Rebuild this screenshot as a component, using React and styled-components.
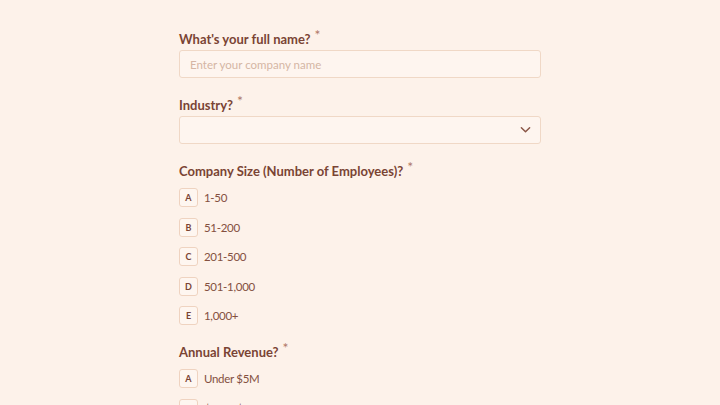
import React from "react";
import styled, { createGlobalStyle } from "styled-components";

const GlobalStyle = createGlobalStyle`
  html, body {
    margin: 0;
    padding: 0;
    background: #fdf2ea;
  }
  body {
    font-family: "Lato", "Liberation Sans", sans-serif;
  }
`;

const companySizes = ["1-50", "51-200", "201-500", "501-1,000", "1,000+"];
const revenues = ["Under $5M", "$5M - $25M"];

function App() {
  return (
    <>
      <GlobalStyle />
      <Page>
        <Form>
          <Field>
            <Label>
              What's your full name?<Req>*</Req>
            </Label>
            <Input placeholder="Enter your company name" />
          </Field>

          <Field>
            <Label>
              Industry?<Req>*</Req>
            </Label>
            <SelectBox>
              <Chevron viewBox="0 0 12 8" width="11" height="8">
                <path d="M1.5 1.5 L6 6 L10.5 1.5" fill="none" stroke="#8a5646" strokeWidth="1.6" strokeLinecap="round" strokeLinejoin="round" />
              </Chevron>
            </SelectBox>
          </Field>

          <Field>
            <Label $tight>
              Company Size (Number of Employees)?<Req>*</Req>
            </Label>
            <Options>
              {companySizes.map((size, i) => (
                <Option key={size}>
                  <Key>{String.fromCharCode(65 + i)}</Key>
                  <OptionText>{size}</OptionText>
                </Option>
              ))}
            </Options>
          </Field>

          <Field>
            <Label $tight>
              Annual Revenue?<Req>*</Req>
            </Label>
            <Options>
              {revenues.map((rev, i) => (
                <Option key={rev}>
                  <Key>{String.fromCharCode(65 + i)}</Key>
                  <OptionText>{rev}</OptionText>
                </Option>
              ))}
            </Options>
          </Field>
        </Form>
      </Page>
    </>
  );
}

export default App;

const Page = styled.div`
  width: 720px;
  height: 405px;
  overflow: hidden;
  display: flex;
  justify-content: center;
`;

const Form = styled.div`
  width: 362px;
  padding-top: 25px;
  display: flex;
  flex-direction: column;
  gap: 13px;
`;

const Field = styled.div`
  display: flex;
  flex-direction: column;
`;

const Label = styled.div`
  height: 20px;
  line-height: 20px;
  font-size: 13px;
  font-weight: 700;
  color: #7a4434;
  margin-bottom: ${(p) => (p.$tight ? "11px" : "5px")};
  white-space: nowrap;
`;

const Req = styled.span`
  font-size: 14px;
  font-weight: 400;
  color: #b07866;
  vertical-align: 4px;
  margin-left: 4px;
`;

const Input = styled.input`
  box-sizing: border-box;
  height: 28px;
  width: 100%;
  border: 1px solid #f0d8c6;
  border-radius: 3px;
  background: #fef5ef;
  padding: 0 10px;
  font-family: inherit;
  font-size: 11.5px;
  color: #7a4434;
  outline: none;

  &::placeholder {
    color: #d5b5a4;
  }
`;

const SelectBox = styled.div`
  box-sizing: border-box;
  height: 28px;
  border: 1px solid #f0d8c6;
  border-radius: 3px;
  background: #fef5ef;
  display: flex;
  align-items: center;
  justify-content: flex-end;
  padding-right: 9px;
`;

const Chevron = styled.svg`
  display: block;
`;

const Options = styled.div`
  display: flex;
  flex-direction: column;
  gap: 10.5px;
`;

const Option = styled.div`
  display: flex;
  align-items: center;
  gap: 6px;
  height: 19px;
`;

const Key = styled.div`
  box-sizing: border-box;
  width: 19px;
  height: 19px;
  border: 1px solid #efd3c0;
  border-radius: 3px;
  background: #fef6f0;
  display: flex;
  align-items: center;
  justify-content: center;
  font-size: 9px;
  font-weight: 700;
  color: #7a4434;
`;

const OptionText = styled.span`
  font-size: 11.5px;
  letter-spacing: -0.3px;
  color: #84503f;
`;
